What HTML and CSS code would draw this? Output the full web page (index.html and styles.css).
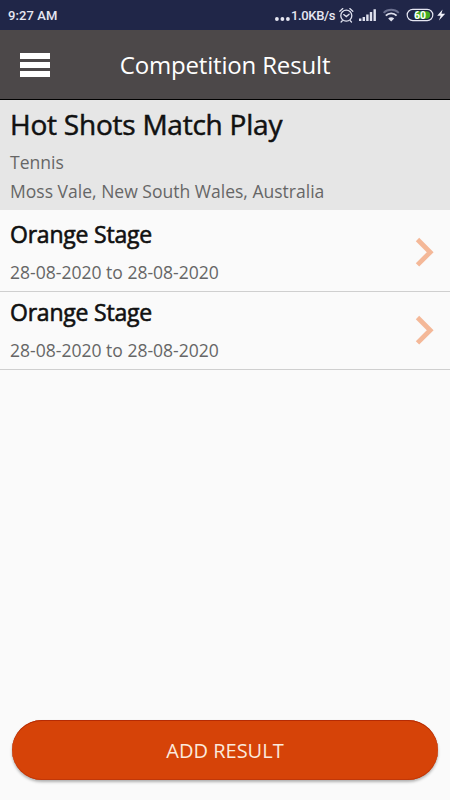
FILE: index.html
```html
<!DOCTYPE html>
<html lang="en">
<head>
<meta charset="utf-8">
<title>Competition Result</title>
<link rel="stylesheet" href="styles.css">
</head>
<body>
<div class="status">
  <span class="time">9:27 AM</span>
  <div class="tray">
    <svg class="dots" width="16" height="30" viewBox="0 0 16 30"><g fill="#e6e7f2"><circle cx="1.9" cy="19" r="1.9"/><circle cx="7.4" cy="19" r="1.9"/><circle cx="12.9" cy="19" r="1.9"/></g></svg>
    <span class="speed">1.0KB/s</span>
    <svg class="icons" width="112" height="30" viewBox="338 0 112 30">
      <g fill="none" stroke="#dfe1ee" stroke-width="1.3" stroke-linecap="round">
        <circle cx="346.3" cy="15.7" r="5.5"/>
        <path d="M339.8 11.2l3-2.6M352.8 11.2l-3-2.6M342.3 20.8l-1.2 1.2M350.3 20.8l1.2 1.2M343.7 14.6l2.6 2 2.8-2.4"/>
      </g>
      <g fill="#dfe1ee">
        <path d="M359 18.6h2.4V21H359zM362.6 17h2.4v4h-2.4zM366.2 14.6h2.4V21h-2.4zM369.8 12h2.4v9h-2.4zM373.5 9.3h2.4V21h-2.4z"/>
        <path d="M388.2 18.5a4.2 4.2 0 0 1 6 0L391.2 21.6z"/>
      </g>
      <g fill="none" stroke-width="1.8">
        <path stroke="#6c7190" d="M383.6 12.8a11 11 0 0 1 15.2 0"/>
        <path stroke="#dfe1ee" d="M385.8 15.6a7.6 7.6 0 0 1 10.8 0"/>
      </g>
      <rect x="407.2" y="9.4" width="25.6" height="11.2" rx="5.6" fill="none" stroke="#e6e7f2" stroke-width="1.2"/>
      <path d="M415 11.3h11.5a3.7 3.7 0 0 1 0 7.4H415z" fill="#43ad20"/>
      <text class="charge" x="420" y="18.8" text-anchor="middle">60</text>
      <path d="M442.6 9.5l-5.4 6.3h3.5l-1.8 4.8 6.3-6.8h-3.8z" fill="#f1f2fa"/>
    </svg>
  </div>
</div>
<header class="bar">
  <div class="menu"><i></i><i></i><i></i></div>
  <h1 class="title">Competition Result</h1>
</header>
<section class="event">
  <h2 class="name">Hot Shots Match Play</h2>
  <p class="meta sport">Tennis</p>
  <p class="meta place">Moss Vale, New South Wales, Australia</p>
</section>
<main class="list">
  <div class="row first">
    <div><h3 class="stage">Orange Stage</h3><p class="meta dates">28-08-2020 to 28-08-2020</p></div>
    <svg class="chevron" width="20" height="32" viewBox="0 0 20 32"><path d="M2.5 2.5L15.2 15.2 2.5 27.9" fill="none" stroke="#f4b898" stroke-width="4.8"/></svg>
  </div>
  <div class="row">
    <div><h3 class="stage">Orange Stage</h3><p class="meta dates">28-08-2020 to 28-08-2020</p></div>
    <svg class="chevron" width="20" height="32" viewBox="0 0 20 32"><path d="M2.5 2.5L15.2 15.2 2.5 27.9" fill="none" stroke="#f4b898" stroke-width="4.8"/></svg>
  </div>
</main>
<button class="add">ADD RESULT</button>
</body>
</html>
```
FILE: styles.css
```css
* { box-sizing: border-box; margin: 0; padding: 0; }
body {
  height: 800px;
  display: flex;
  flex-direction: column;
  background: #fafafa;
  font-family: "Open Sans", sans-serif;
  overflow: hidden;
}
.status {
  height: 30px;
  flex: none;
  display: flex;
  justify-content: space-between;
  background: #202648;
  color: #e6e7f2;
  font: 500 13px/31px Roboto, sans-serif;
}
.time { padding-left: 8px; letter-spacing: 0.1px; }
.tray { display: flex; }
.speed { width: 47px; letter-spacing: -0.35px; white-space: nowrap; }
.tray svg { display: block; flex: none; }
.charge { font: 700 10.5px Roboto, sans-serif; fill: #fff; }
.bar {
  height: 70px;
  flex: none;
  display: grid;
  grid-template-columns: 50px 1fr 50px;
  background: #4c4849;
  border-bottom: 1px solid #000;
  padding-bottom: 1px;
}
.menu {
  width: 30px;
  margin: 23px 0 0 20px;
  display: flex;
  flex-direction: column;
  gap: 3px;
}
.menu i { height: 6px; background: #fff; }
.title {
  color: #fff;
  font-size: 24px;
  font-weight: 400;
  line-height: 70px;
  letter-spacing: -0.17px;
  text-align: center;
  white-space: nowrap;
}
.event { height: 110px; flex: none; padding: 4px 10px 0; background: #e6e6e6; }
.name {
  font-size: 28px;
  font-weight: 400;
  line-height: 40px;
  letter-spacing: -0.23px;
  color: #111;
  -webkit-text-stroke: 0.5px #111;
}
.meta { font-size: 17.55px; line-height: 28px; color: #666; white-space: nowrap; }
.sport { margin-top: 4px; }
.place { margin-top: 1px; }
.row {
  height: 78px;
  display: flex;
  justify-content: space-between;
  padding: 4px 15px 0 10px;
  border-bottom: 1px solid #cfcfcf;
}
.first { height: 82px; padding-top: 8px; }
.stage {
  font-size: 23px;
  font-weight: 400;
  line-height: 32px;
  letter-spacing: -0.21px;
  color: #111;
  -webkit-text-stroke: 0.6px #111;
}
.dates { margin-top: 8px; }
.chevron { margin-top: 19px; }
.add {
  height: 60px;
  margin: auto 12px 20px;
  padding-top: 1px;
  flex: none;
  border: 0;
  border-radius: 30px;
  background: #d64308;
  box-shadow: 0 2px 3px rgba(0, 0, 0, 0.3), inset 0 1px #b52b05, inset 0 -1px #c13708;
  color: #fbe9dc;
  font: 400 20px/59px "Open Sans", sans-serif;
}
```
